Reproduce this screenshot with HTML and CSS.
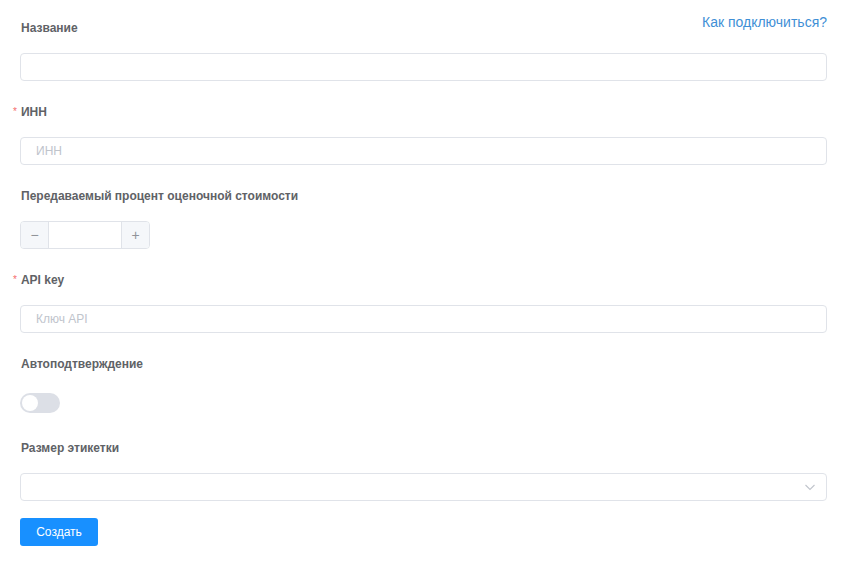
FILE: index.html
```html
<!DOCTYPE html>
<html lang="ru">
<head>
<meta charset="utf-8">
<link rel="stylesheet" href="styles.css">
</head>
<body>
<form class="form">
  <div class="item">
    <div class="label-row">
      <label class="label">Название</label>
      <a class="link" href="#">Как подключиться?</a>
    </div>
    <div class="control"><input class="input" type="text"></div>
  </div>
  <div class="item">
    <div class="label-row"><label class="label req">ИНН</label></div>
    <div class="control"><input class="input" type="text" placeholder="ИНН"></div>
  </div>
  <div class="item">
    <div class="label-row"><label class="label">Передаваемый процент оценочной стоимости</label></div>
    <div class="control">
      <div class="number">
        <span class="num-btn dec">−</span>
        <input class="num-input" type="text">
        <span class="num-btn inc">+</span>
      </div>
    </div>
  </div>
  <div class="item">
    <div class="label-row"><label class="label req">API key</label></div>
    <div class="control"><input class="input" type="text" placeholder="Ключ API"></div>
  </div>
  <div class="item">
    <div class="label-row"><label class="label">Автоподтверждение</label></div>
    <div class="control"><span class="switch"><span class="knob"></span></span></div>
  </div>
  <div class="item last">
    <div class="label-row"><label class="label">Размер этикетки</label></div>
    <div class="control">
      <div class="select">
        <svg class="chev" width="12" height="12" viewBox="0 0 12 12"><path d="M1.5 4 L6 8.5 L10.5 4" fill="none" stroke="#c0c4cc" stroke-width="1.1"/></svg>
      </div>
    </div>
  </div>
  <button class="btn" type="button">Создать</button>
</form>
</body>
</html>
```

FILE: styles.css
```css
* { box-sizing: border-box; }
html, body { margin: 0; padding: 0; background: #fff; }
body { font-family: "Liberation Sans", Arial, sans-serif; color: #606266; }
.form { padding: 18px 19px 0 20px; display: flex; flex-direction: column; align-items: stretch; }
.item { display: flex; flex-direction: column; margin-bottom: 21px; }
.item.last { margin-bottom: 17px; }
.label-row { display: flex; justify-content: space-between; align-items: flex-start; height: 20px; margin-bottom: 15px; }
.label { font-size: 12px; font-weight: bold; line-height: 20px; color: #606266; padding-left: 1px; }
.req::before { content: "*"; color: #f56c6c; font-size: 10px; margin-left: -8px; margin-right: 4px; font-weight: normal; vertical-align: 1px; }
.link { font-size: 14px; line-height: 16px; margin-top: -4px; color: #3f8fd6; text-decoration: none; }
.control { height: 28px; display: flex; align-items: center; }
.input { width: 100%; height: 28px; border: 1px solid #e0e3e9; border-radius: 4px; padding: 0 15px; font-family: inherit; font-size: 12px; color: #606266; outline: none; }
.input::placeholder { color: #c0c4cc; }
.number { display: flex; width: 130px; height: 28px; border: 1px solid #e0e3e9; border-radius: 4px; overflow: hidden; }
.num-btn { width: 28px; flex: none; background: #f5f7fa; color: #909399; font-size: 14px; display: flex; align-items: center; justify-content: center; }
.dec { border-right: 1px solid #e0e3e9; }
.inc { border-left: 1px solid #e0e3e9; }
.num-input { flex: 1; min-width: 0; border: 0; outline: none; height: 100%; padding: 0; }
.switch { width: 40px; height: 20px; border-radius: 10px; background: #dcdfe6; display: flex; align-items: center; padding: 0 2px; }
.knob { width: 16px; height: 16px; border-radius: 50%; background: #fff; }
.select { width: 100%; height: 28px; border: 1px solid #e0e3e9; border-radius: 4px; display: flex; align-items: center; justify-content: flex-end; padding-right: 10px; }
.chev { display: block; }
.btn { align-self: flex-start; width: 78px; height: 28px; border: 0; border-radius: 3px; background: #1890ff; color: #fff; font-family: inherit; font-size: 12px; padding: 0; }
```
